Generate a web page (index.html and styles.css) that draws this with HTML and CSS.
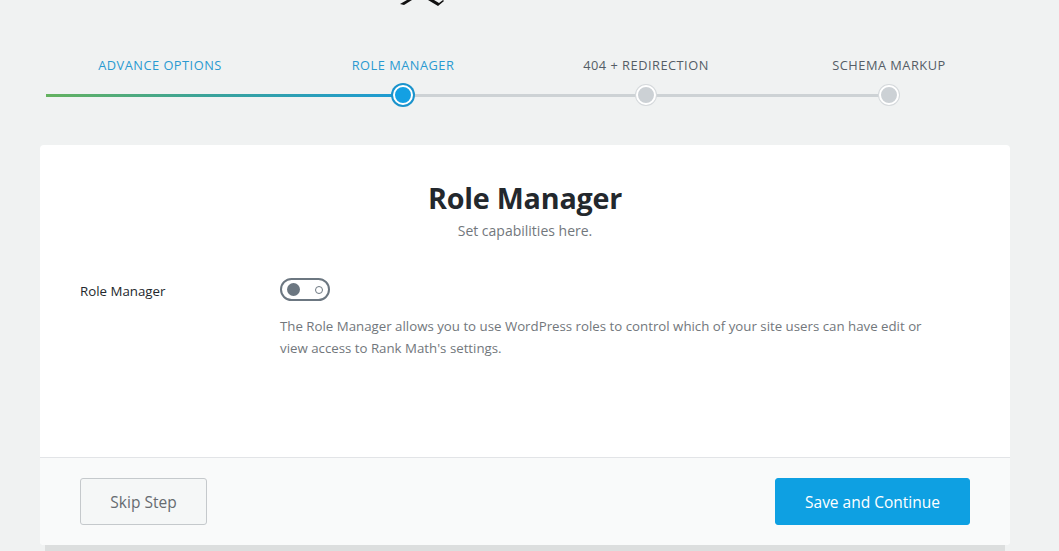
FILE: index.html
```html
<!DOCTYPE html>
<html lang="en">
<head>
<meta charset="utf-8">
<title>Role Manager</title>
<link rel="stylesheet" href="styles.css">
</head>
<body>
<div class="page">
  <div class="logo">
    <svg width="50" height="6" viewBox="0 0 50 6"><path d="M2 4 L9 0 L14 0 L6 5 Z" fill="#111"/><path d="M30 0 L36 0 L41 3 L45 0 L46 1 L40 6 Z" fill="#111"/></svg>
  </div>
  <div class="steps">
    <div class="step done">Advance Options</div>
    <div class="step active">Role Manager</div>
    <div class="step">404 + Redirection</div>
    <div class="step">Schema Markup</div>
  </div>
  <div class="track">
    <span class="slot"></span>
    <span class="slot"><span class="dot current"></span></span>
    <span class="slot"><span class="dot"></span></span>
    <span class="slot"><span class="dot"></span></span>
  </div>

  <div class="card">
    <div class="card-body">
      <h1 class="title">Role Manager</h1>
      <p class="subtitle">Set capabilities here.</p>
      <div class="field">
        <div class="field-label">Role Manager</div>
        <div class="field-control">
          <span class="toggle"><span class="knob"></span><span class="ring"></span></span>
          <p class="desc">The Role Manager allows you to use WordPress roles to control which of your site users can have edit or view access to Rank Math's settings.</p>
        </div>
      </div>
    </div>
    <div class="card-footer">
      <button class="btn btn-skip">Skip Step</button>
      <button class="btn btn-primary">Save and Continue</button>
    </div>
  </div>
  <div class="under"></div>
</div>
</body>
</html>
```
FILE: styles.css
```css
* { box-sizing: border-box; }
html, body { margin: 0; padding: 0; }
body {
  background: #f0f2f2;
  font-family: "Open Sans", "Noto Sans", "Liberation Sans", sans-serif;
  color: #23282d;
  width: 1059px;
  height: 551px;
  overflow: hidden;
}
.page { padding-left: 40px; }
.logo { height: 6px; padding-left: 358px; line-height: 0; }
.logo svg { display: block; }

.steps {
  display: grid;
  grid-template-columns: repeat(4, 243px);
  margin-left: -1.5px;
  margin-top: 51px;
}
.step {
  text-align: center;
  font-size: 12.8px;
  letter-spacing: 0.5px;
  text-transform: uppercase;
  color: #555d66;
  line-height: 16px;
}
.step.done, .step.active { color: #2a9ad1; }

.track {
  display: grid;
  grid-template-columns: repeat(4, 243px);
  margin-left: -1.5px;
  margin-top: 11px;
  height: 22px;
  background:
    linear-gradient(to right, #64b25f 0%, #3aa39a 45%, #1c9bd6 100%) no-repeat 7.5px 50% / 358px 3px,
    linear-gradient(#cdd2d5, #cdd2d5) no-repeat 7.5px 50% / 842px 3px;
}
.slot { display: flex; align-items: center; justify-content: center; }
.dot {
  width: 20px; height: 20px;
  border-radius: 50%;
  background: #ccd1d5;
  border: 2px solid #fff;
  box-shadow: 0 0 0 1px #d5d9dc;
}
.dot.current {
  width: 20px; height: 20px;
  background: #13a0e3;
  border: 2px solid #fff;
  box-shadow: 0 0 0 2px #1a93cc;
}

.card {
  width: 970px;
  margin-top: 39px;
  background: #fff;
  border-radius: 4px;
  overflow: hidden;
}
.card-body { padding: 36px 40px 0; height: 312px; }
.title {
  margin: 0;
  text-align: center;
  font-size: 28.7px;
  font-weight: 700;
  line-height: 34px;
  color: #23282d;
  letter-spacing: -0.2px;
}
.subtitle {
  margin: 0;
  text-align: center;
  font-size: 14px;
  color: #72777c;
  line-height: 20px;
  margin-top: 6px;
}
.field { display: flex; margin-top: 37px; }
.field-label {
  width: 200px;
  font-size: 13.3px;
  font-weight: 500;
  color: #23282d;
  padding-top: 4px;
}
.field-control { flex: 1; }
.toggle {
  display: flex;
  align-items: center;
  justify-content: space-between;
  width: 50px; height: 23px;
  border: 2px solid #6c7781;
  border-radius: 12px;
  padding: 0 5px 0 5px;
}
.knob { width: 13px; height: 13px; border-radius: 50%; background: #6c7781; }
.ring { width: 8px; height: 8px; border-radius: 50%; border: 1.5px solid #6c7781; }
.desc {
  margin: 14px 0 0;
  font-size: 13.27px;
  line-height: 22px;
  color: #72777c;
  max-width: 660px;
}

.card-footer {
  display: flex;
  justify-content: space-between;
  align-items: center;
  background: #f9fafa;
  border-top: 1px solid #e2e4e7;
  height: 88px;
  padding: 0 40px;
}
.btn {
  height: 47px;
  font-family: inherit;
  font-size: 15.5px;
  border-radius: 3px;
  cursor: pointer;
}
.btn-skip {
  width: 127px;
  background: #f5f7f7;
  border: 1px solid #c5c9cc;
  color: #666b70;
}
.btn-primary {
  width: 195px;
  background: #0ea0e2;
  border: 1px solid #0ea0e2;
  color: #fff;
}
.under {
  margin-left: 5px;
  width: 960px;
  height: 8px;
  background: #dcdede;
}
```
